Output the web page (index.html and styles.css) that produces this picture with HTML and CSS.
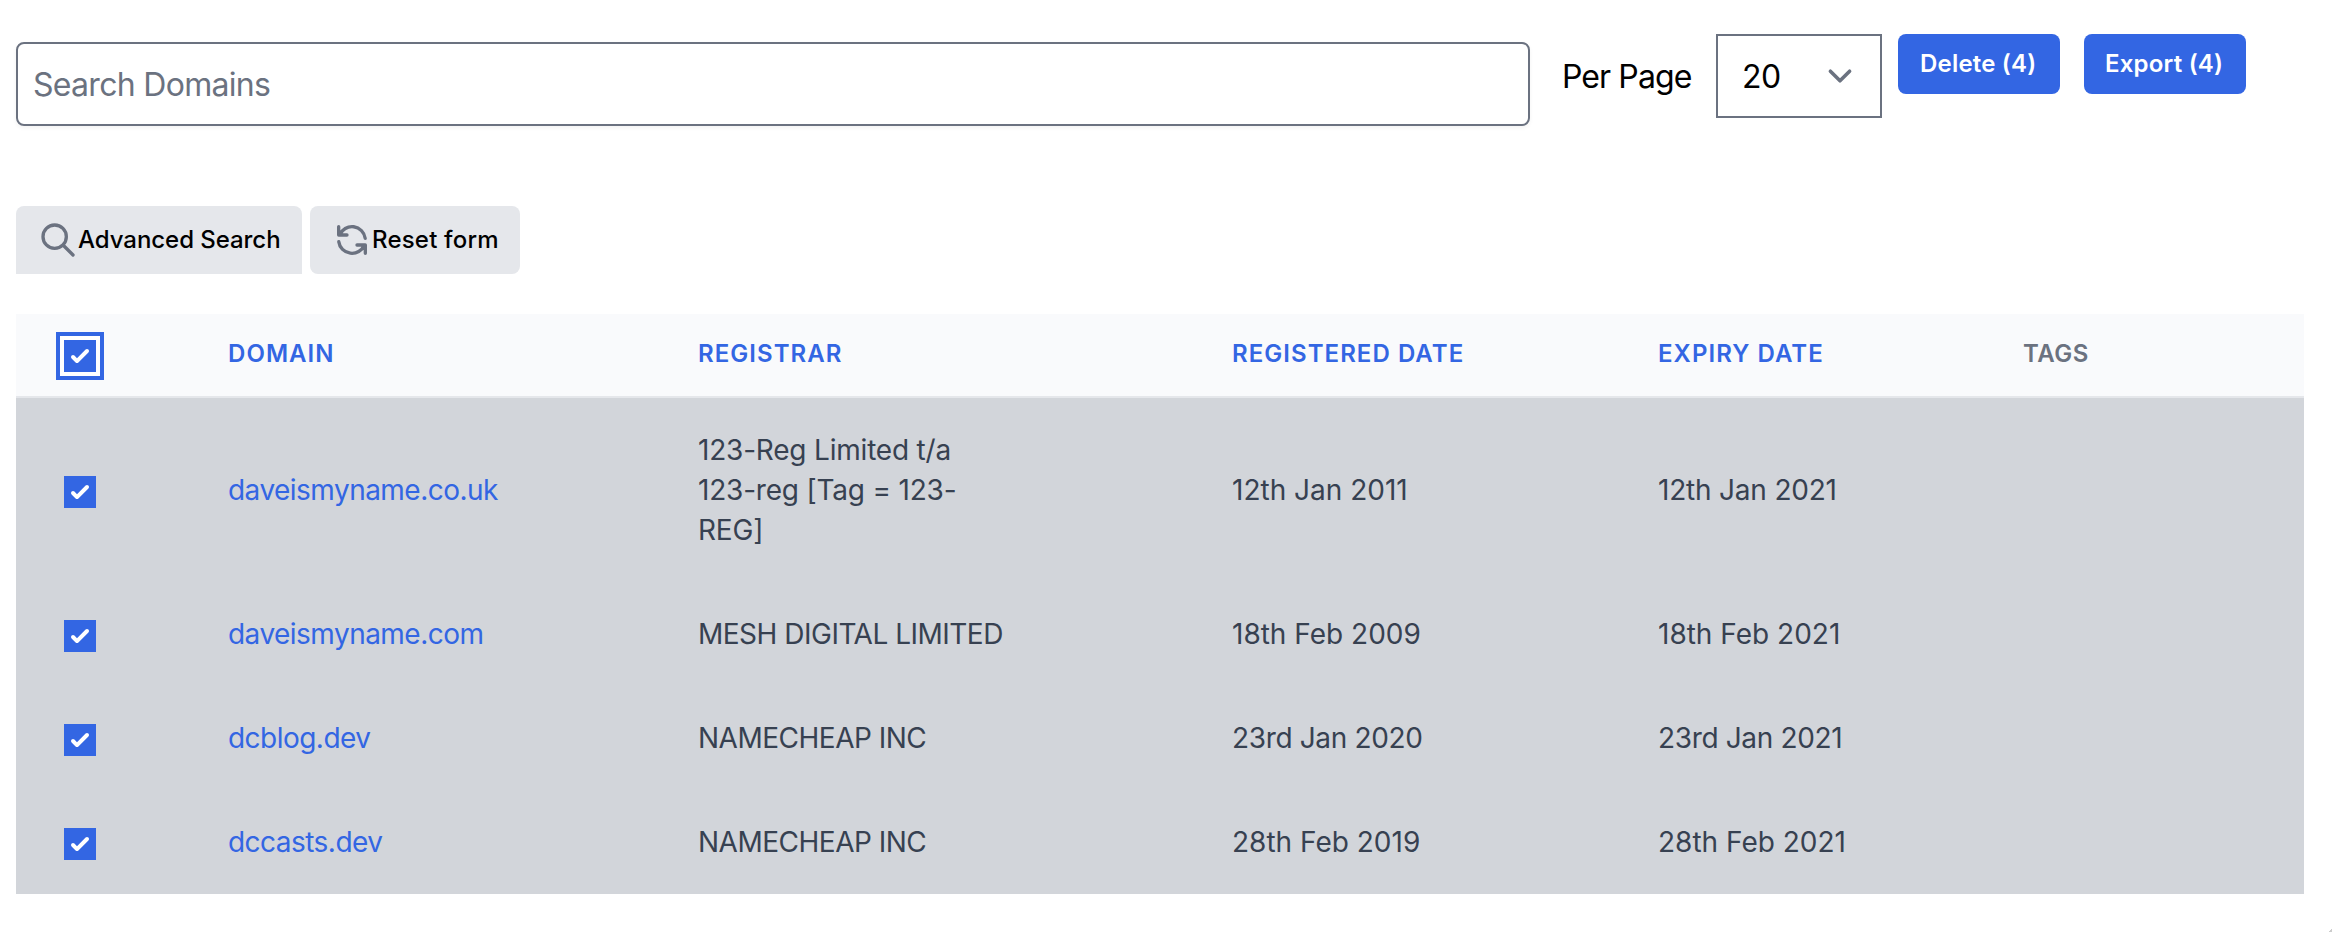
FILE: index.html
```html
<!DOCTYPE html>
<html lang="en">
<head>
<meta charset="utf-8">
<title>Domains</title>
<link rel="stylesheet" href="styles.css">
</head>
<body>
<svg class="defs" width="0" height="0">
  <symbol id="check" viewBox="0 0 16 16"><path fill="#fff" d="M12.207 4.793a1 1 0 010 1.414l-5 5a1 1 0 01-1.414 0l-2-2a1 1 0 011.414-1.414L6.5 9.086l4.293-4.293a1 1 0 011.414 0z"/></symbol>
</svg>
<main class="page">
  <div class="toolbar">
    <div class="search"><span>Search Domains</span></div>
    <span class="per-page">Per Page</span>
    <div class="select"><span>20</span>
      <svg class="chevron" viewBox="0 0 20 20" fill="none" stroke="#6b7280" stroke-width="1.5" stroke-linecap="round" stroke-linejoin="round"><path d="M6 8l4 4 4-4"/></svg>
    </div>
    <button class="btn delete">Delete (4)</button>
    <button class="btn export">Export (4)</button>
  </div>
  <div class="actions">
    <button class="action advanced">
      <svg class="icon" viewBox="0 0 24 24" fill="none" stroke="#6b7280" stroke-width="2" stroke-linecap="round" stroke-linejoin="round"><path d="M21 21l-6-6m2-5a7 7 0 11-14 0 7 7 0 0114 0z"/></svg><span>Advanced Search</span>
    </button>
    <button class="action reset">
      <svg class="icon" viewBox="0 0 24 24" fill="none" stroke="#6b7280" stroke-width="2" stroke-linecap="round" stroke-linejoin="round"><path d="M4 4v5h.582m15.356 2A8.001 8.001 0 004.582 9m0 0H9m11 11v-5h-.581m0 0a8.003 8.003 0 01-15.357-2m15.357 2H15"/></svg><span>Reset form</span>
    </button>
  </div>
  <div class="table">
    <div class="row head">
      <div><svg class="box focus"><use href="#check"/></svg></div>
      <div class="label">DOMAIN</div><div class="label">REGISTRAR</div><div class="label">REGISTERED DATE</div><div class="label">EXPIRY DATE</div><div class="label plain">TAGS</div>
    </div>
    <div class="row tall">
      <div><svg class="box"><use href="#check"/></svg></div>
      <div><a>daveismyname.co.uk</a></div><div class="mixed">123-Reg Limited t/a<br>123-reg [Tag = 123-<br>REG]</div><div>12th Jan 2011</div><div class="mixed">12th Jan 2021</div><div></div>
    </div>
    <div class="row">
      <div><svg class="box"><use href="#check"/></svg></div>
      <div><a>daveismyname.com</a></div><div class="caps">MESH DIGITAL LIMITED</div><div>18th Feb 2009</div><div>18th Feb 2021</div><div></div>
    </div>
    <div class="row">
      <div><svg class="box"><use href="#check"/></svg></div>
      <div><a>dcblog.dev</a></div><div class="caps">NAMECHEAP INC</div><div class="snug">23rd Jan 2020</div><div class="snug">23rd Jan 2021</div><div></div>
    </div>
    <div class="row">
      <div><svg class="box"><use href="#check"/></svg></div>
      <div><a>dccasts.dev</a></div><div class="caps">NAMECHEAP INC</div><div>28th Feb 2019</div><div>28th Feb 2021</div><div></div>
    </div>
  </div>
</main>
<div class="grip"></div>
</body>
</html>
```
FILE: styles.css
```css
* { box-sizing: border-box; }
body { margin: 0; background: #fff; color: #000; font-family: Inter, "Liberation Sans", sans-serif; }
.defs { display: block; height: 0; }
.page { padding: 34px 28px 0 16px; }
.toolbar { display: flex; align-items: flex-start; height: 92px; }
.search { width: 1514px; height: 84px; margin-top: 8px; padding-left: 15px; border: 2px solid #6b7280; border-radius: 8px; display: flex; align-items: center; font-size: 32px; letter-spacing: -.7px; color: #6b7280; box-shadow: 0 2px 4px rgba(0,0,0,.05); }
.per-page { margin-left: 32px; width: 154px; font-size: 32px; letter-spacing: -.9px; line-height: 85px; white-space: nowrap; }
.select { width: 166px; height: 84px; padding: 0 16px 0 24px; border: 2px solid #6b7280; display: flex; align-items: center; justify-content: space-between; font-size: 32px; letter-spacing: -.6px; }
.chevron { width: 48px; height: 48px; }
.btn { width: 162px; height: 60px; margin-left: 16px; padding: 0 0 0 22px; border: 0; border-radius: 8px; background: #3366e3; color: #fff; font: 600 24px/60px Inter, sans-serif; letter-spacing: .2px; text-align: left; white-space: nowrap; }
.btn.export { margin-left: 24px; padding-left: 21px; }
.actions { display: flex; gap: 8px; margin-top: 80px; }
.action { height: 68px; padding: 0 0 0 22px; border: 0; border-radius: 8px; background: #e5e7eb; color: #000; display: flex; align-items: center; font: 500 24px/68px Inter, sans-serif; white-space: nowrap; }
.advanced { width: 286px; border-radius: 8px 8px 0 0; letter-spacing: -.05px; }
.reset { width: 210px; letter-spacing: .2px; }
.icon { width: 40px; height: 40px; flex: none; }
.table { margin-top: 40px; font-size: 28px; line-height: 40px; color: #374151; }
.row { display: grid; grid-template-columns: 164px 470px 534px 426px 365px 329px; align-items: center; height: 104px; background: #d2d5da; }
.row > div { padding-left: 48px; }
.row a { color: #3366e3; letter-spacing: -.53px; }
.row .mixed { letter-spacing: -.2px; }
.row .caps { letter-spacing: -.5px; }
.row .snug { letter-spacing: -.35px; }
.row.tall { height: 184px; }
.row.head { height: 84px; background: #f9fafc; border-bottom: 2px solid #e5e7eb; font-size: 24px; font-weight: 600; letter-spacing: 1.05px; color: #3366e3; }
.head .label { padding-bottom: 3px; }
.head .plain { color: #6b7280; letter-spacing: .5px; }
.box { display: block; width: 32px; height: 32px; margin-top: 4px; background: #3366e3; }
.box.focus { margin-top: 2px; box-shadow: 0 0 0 4px #fff, 0 0 0 8px #3366e3; }
.grip { position: fixed; right: 0; bottom: 0; width: 4px; height: 4px; background: linear-gradient(135deg, transparent 50%, #ccc 50%); }
```
